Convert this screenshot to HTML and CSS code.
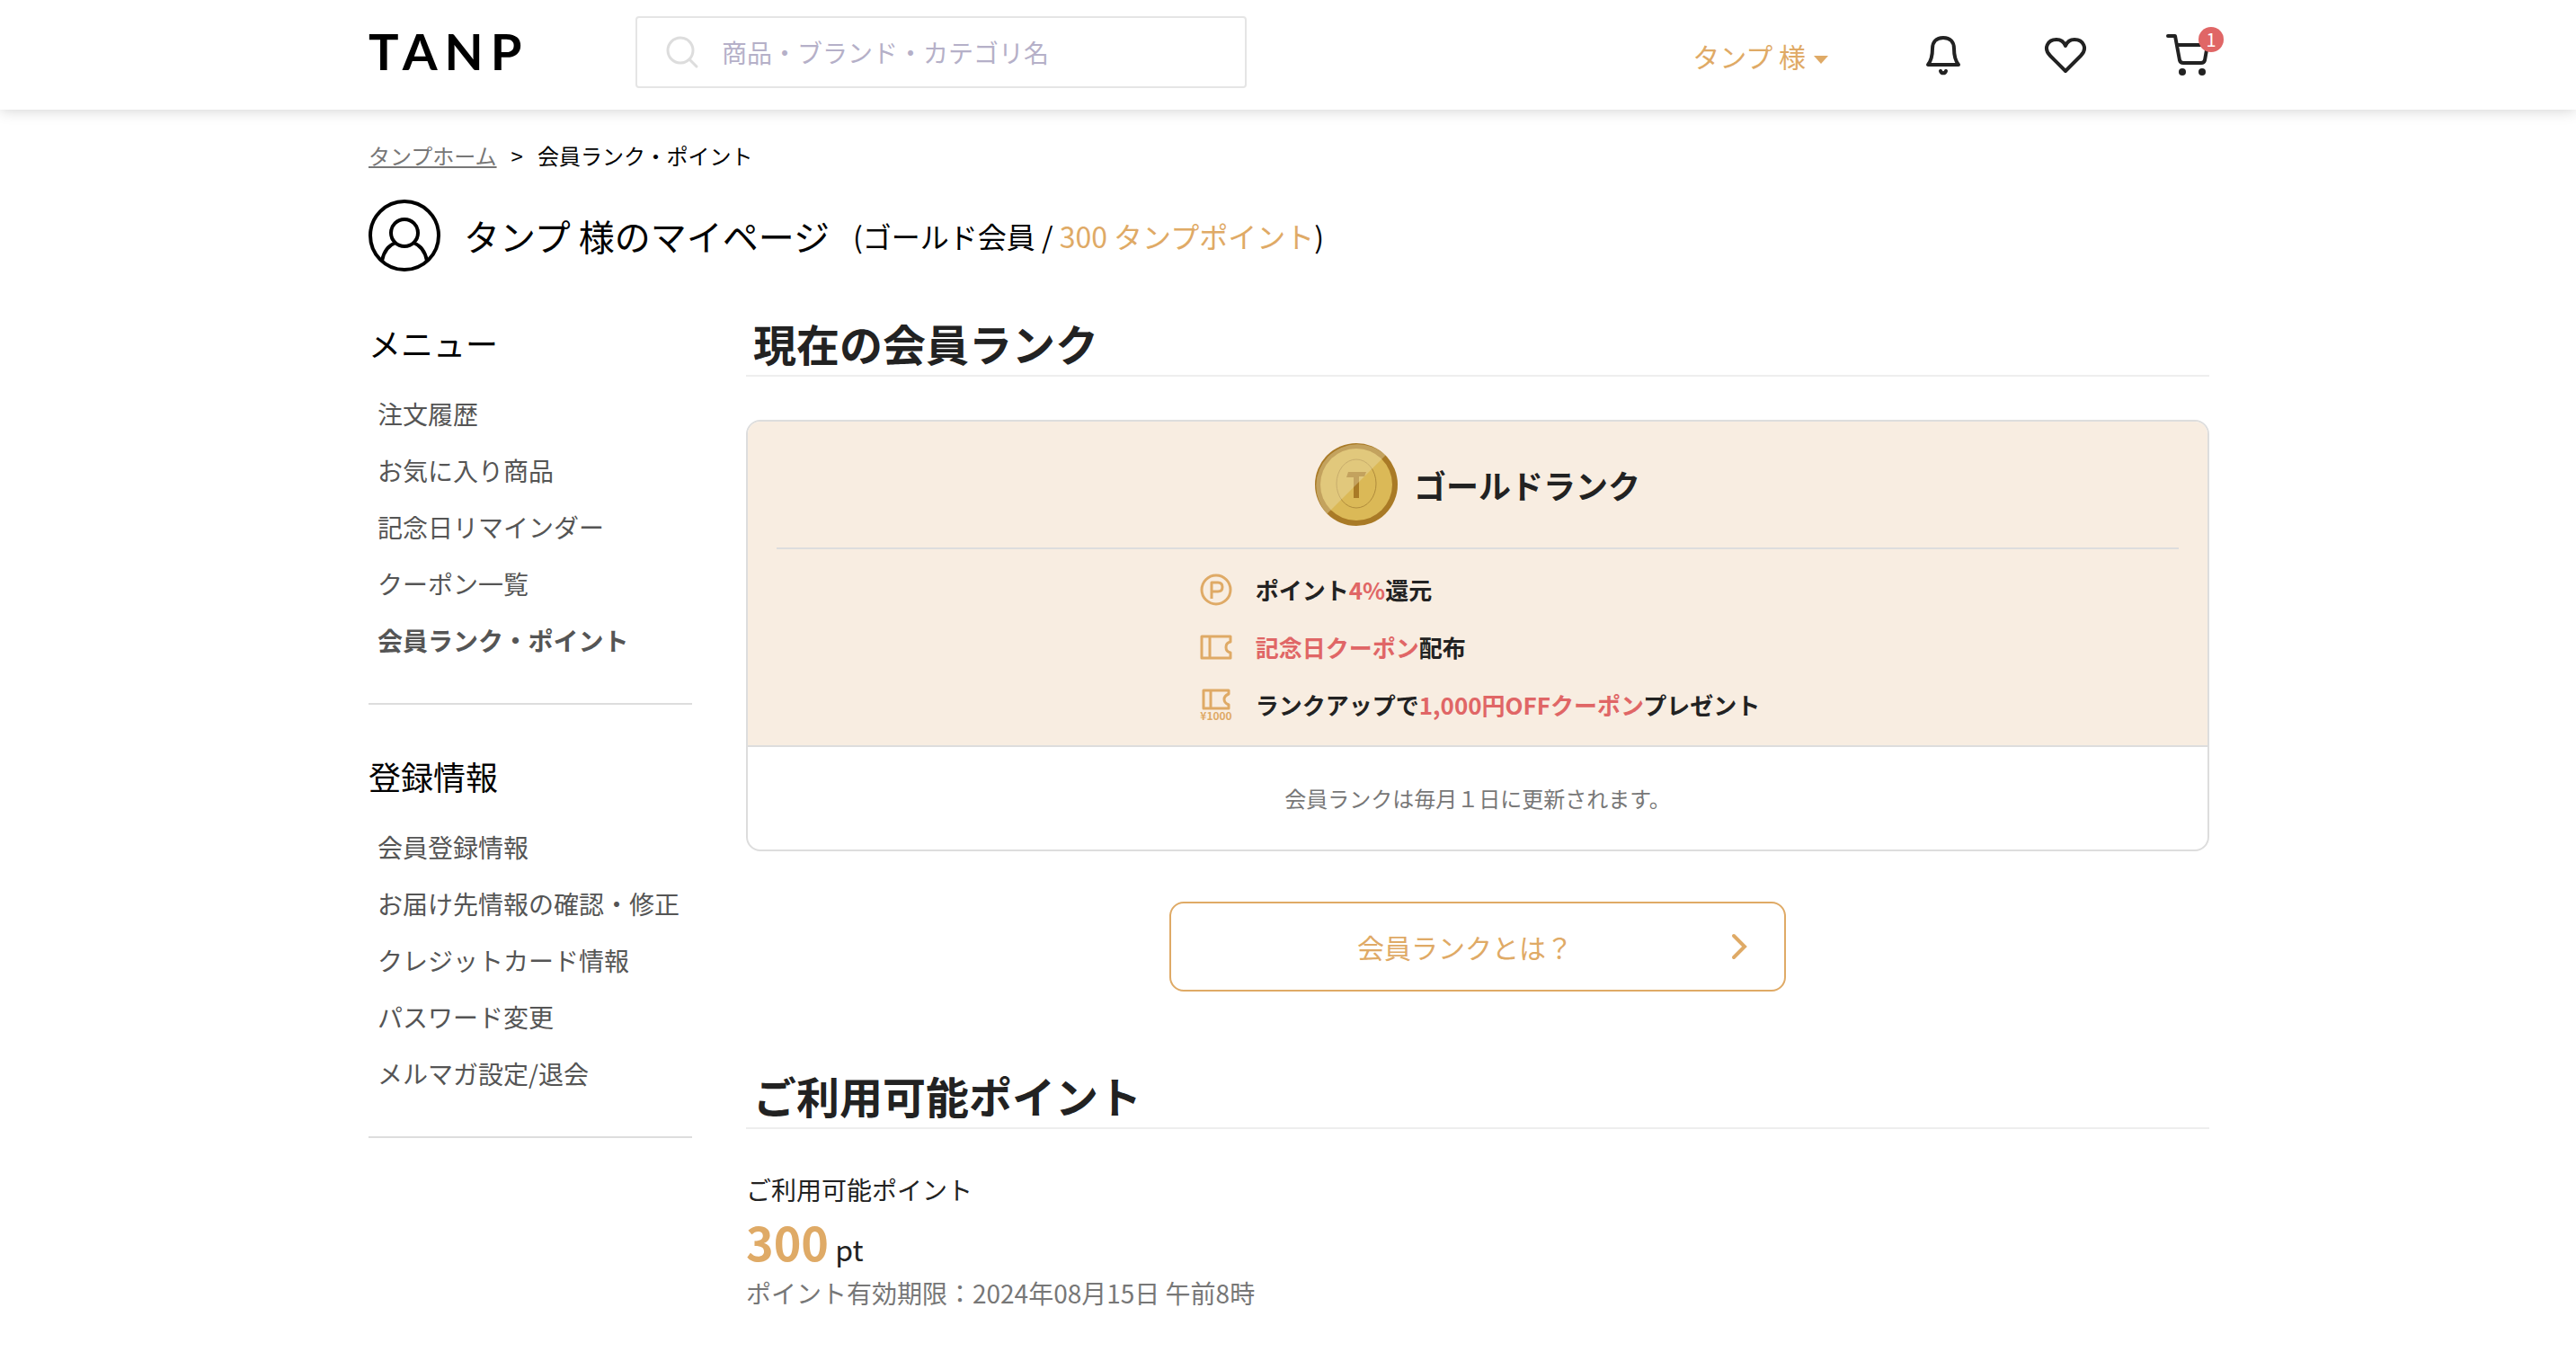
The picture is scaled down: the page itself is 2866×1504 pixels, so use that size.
FILE: index.html
```html
<!DOCTYPE html>
<html lang="ja">
<head>
<meta charset="utf-8">
<meta name="viewport" content="width=device-width, initial-scale=1">
<title>会員ランク・ポイント | TANP</title>
<link rel="stylesheet" href="styles.css">
</head>
<body>
<header class="site-header">
  <div class="container header-inner">
    <a class="logo" href="#">TANP</a>
    <form class="search" role="search">
      <svg class="search-icon" viewBox="0 0 36 36" aria-hidden="true"><circle cx="16" cy="16" r="14"/><path d="M27 27l7 7"/></svg>
      <input class="search-input" type="search" aria-label="商品検索" placeholder="商品・ブランド・カテゴリ名">
    </form>
    <nav class="header-nav" aria-label="アカウント">
      <button class="user-menu" type="button">タンプ 様<span class="caret"></span></button>
      <a class="nav-icon" href="#" aria-label="お知らせ">
        <svg viewBox="0 0 48 48"><path d="M24 4c-8 0-12 5-12 12 0 8-1 13-5 18h34c-4-5-5-10-5-18 0-7-4-12-12-12z"/><path d="M21 41c1 3 5 3 6 0"/></svg>
      </a>
      <a class="nav-icon" href="#" aria-label="お気に入り">
        <svg viewBox="0 0 48 48"><path d="M24 41L7 24C-1 16 4 6 14 6c4 0 8 2 10 7 2-5 6-7 10-7 10 0 15 10 7 18z"/></svg>
      </a>
      <a class="nav-icon" href="#" aria-label="カート">
        <svg viewBox="0 0 48 48"><path d="M2 2h8l5 27q1 3 4 3h20q3 0 4-3l3-17H12"/><circle class="solid" cx="18" cy="42" r="4"/><circle class="solid" cx="40" cy="42" r="4"/></svg>
        <span class="badge">1</span>
      </a>
    </nav>
  </div>
</header>

<div class="container">
  <nav class="breadcrumb" aria-label="パンくず">
    <a href="#">タンプホーム</a><span>&gt;</span><span>会員ランク・ポイント</span>
  </nav>

  <div class="profile">
    <svg class="avatar" viewBox="0 0 80 80" aria-hidden="true"><circle cx="40" cy="40" r="38"/><circle cx="40" cy="37" r="15"/><path d="M15 68c2-10 7-17 15-20M65 68c-2-10-7-17-15-20"/></svg>
    <h1 class="profile-name">タンプ 様のマイページ</h1>
    <p class="profile-rank">(ゴールド会員 / <a href="#">300 タンプポイント</a>)</p>
  </div>

  <div class="columns">
    <aside class="sidebar">
      <section class="menu">
        <h2 class="menu-title">メニュー</h2>
        <ul class="menu-list">
          <li><a href="#">注文履歴</a></li>
          <li><a href="#">お気に入り商品</a></li>
          <li><a href="#">記念日リマインダー</a></li>
          <li><a href="#">クーポン一覧</a></li>
          <li><a class="current" href="#" aria-current="page">会員ランク・ポイント</a></li>
        </ul>
      </section>
      <section class="menu">
        <h2 class="menu-title">登録情報</h2>
        <ul class="menu-list">
          <li><a href="#">会員登録情報</a></li>
          <li><a href="#">お届け先情報の確認・修正</a></li>
          <li><a href="#">クレジットカード情報</a></li>
          <li><a href="#">パスワード変更</a></li>
          <li><a href="#">メルマガ設定/退会</a></li>
        </ul>
      </section>
    </aside>

    <main class="content">
      <section>
        <h2 class="section-title">現在の会員ランク</h2>
        <div class="rank-card">
          <div class="rank-body">
            <div class="rank-head">
              <svg class="coin" viewBox="0 0 92 92" aria-hidden="true">
                <circle cx="46" cy="46" r="46" fill="#a97a26"/>
                <circle cx="46" cy="46" r="40" fill="#dbb957"/>
                <ellipse cx="46" cy="45" rx="22" ry="27" fill="none" stroke="#b08c3c"/>
                <path d="M37 32h20l-2 5h-6v24h-6V38h-8z" fill="#a97a26"/>
                <path d="M78.5 13.5A46 46 0 0 0 13.5 78.5z" fill="#ecdfb4" fill-opacity=".4"/>
              </svg>
              <h3 class="rank-name">ゴールドランク</h3>
            </div>
            <ul class="benefits">
              <li>
                <svg class="benefit-icon" viewBox="0 0 36 36" aria-hidden="true"><circle cx="18" cy="18" r="16"/><path d="M13 28V10h7q5 0 5 5t-5 5h-7"/></svg>
                <p>ポイント<em>4%</em>還元</p>
              </li>
              <li>
                <svg class="benefit-icon" viewBox="0 0 36 36" aria-hidden="true"><path d="M2 6h32v6q-5 1-5 6t5 6v6H2zM11 6v24"/></svg>
                <p><em>記念日クーポン</em>配布</p>
              </li>
              <li>
                <svg class="benefit-icon" viewBox="0 0 36 36" aria-hidden="true"><path d="M4 2h28v4q-5 2-5 6t5 6v4H4zM12 2v20"/><text x="18" y="35" text-anchor="middle">¥1000</text></svg>
                <p>ランクアップで<em>1,000円OFFクーポン</em>プレゼント</p>
              </li>
            </ul>
          </div>
          <p class="rank-note">会員ランクは毎月１日に更新されます。</p>
        </div>
        <a class="about-link" href="#"><span>会員ランクとは？</span><svg viewBox="0 0 16 28" aria-hidden="true"><path d="M2 2l12 12L2 26"/></svg></a>
      </section>

      <section class="points">
        <h2 class="section-title">ご利用可能ポイント</h2>
        <p class="points-label">ご利用可能ポイント</p>
        <p class="points-value"><strong>300</strong> pt</p>
        <p class="points-expiry">ポイント有効期限：2024年08月15日 午前8時</p>
      </section>
    </main>
  </div>
</div>
</body>
</html>
```
FILE: styles.css
```css
:root {
  --gold: #dfaa66;
  --red: #e06666;
  --ink: #222;
  --line: #ddd;
}

* { box-sizing: border-box; }

body, h1, h2, h3, p, ul { margin: 0; padding: 0; }
ul { list-style: none; }

body {
  font-family: "Noto Sans CJK JP", sans-serif;
  font-size: 28px;
  color: #000;
  background: #fff;
}

a { color: inherit; text-decoration: none; }
svg { display: block; fill: none; flex: none; overflow: visible; }

.container {
  max-width: 2050px;
  margin: 0 auto;
  padding-left: 2px;
}

/* Header */
.site-header {
  background: #fff;
  box-shadow: 0 0 16px rgba(0, 0, 0, .2);
}
.container.header-inner {
  display: flex;
  align-items: center;
  padding: 18px 0 24px 2px;
}
.logo {
  width: 297px;
  padding-bottom: 2px;
  font: 700 56px/78px Lato, sans-serif;
  letter-spacing: 8px;
}
.search {
  display: flex;
  align-items: center;
  gap: 26px;
  flex: 0 1 680px;
  height: 80px;
  padding-left: 32px;
  border: 2px solid #e5e5e5;
  border-radius: 4px;
}
.search-icon { width: 36px; stroke: #ddd; stroke-width: 3; stroke-linecap: round; }
.search-input {
  flex: 1;
  min-width: 0;
  padding: 0;
  border: 0;
  outline: 0;
  background: none;
  font: inherit;
}
.search-input::placeholder { color: #b5b0c8; opacity: 1; }
.header-nav {
  display: flex;
  align-items: center;
  gap: 88px;
  margin-left: auto;
  padding-top: 8px;
}
.user-menu {
  display: flex;
  align-items: center;
  gap: 9px;
  margin-right: 16px;
  padding: 0;
  border: 0;
  background: none;
  color: var(--gold);
  font: inherit;
  font-size: 30px;
}
.caret {
  border: 8px solid transparent;
  border-top: 9px solid currentColor;
  border-bottom: 0;
  margin-top: 8px;
}
.nav-icon { position: relative; }
.nav-icon svg {
  width: 48px;
  height: 48px;
  stroke: var(--ink);
  stroke-width: 4;
  stroke-linejoin: round;
  stroke-linecap: round;
}
.nav-icon .solid { fill: var(--ink); stroke: none; }
.badge {
  position: absolute;
  top: -8px;
  right: -16px;
  width: 28px;
  border-radius: 50%;
  background: var(--red);
  color: #fff;
  font-size: 20px;
  line-height: 28px;
  text-align: center;
}

/* Page heading */
.breadcrumb {
  display: flex;
  gap: 16px;
  padding-top: 33px;
  font-size: 24px;
  line-height: 36px;
}
.breadcrumb a { color: #777; text-decoration: underline; }
.profile {
  display: flex;
  align-items: center;
  margin-top: 31px;
}
.avatar { width: 80px; stroke: #000; stroke-width: 4; }
.profile-name { margin: 0 26px; font-size: 40px; line-height: 60px; font-weight: 400; }
.profile-rank { font-size: 32px; line-height: 60px; }
.profile-rank a { color: var(--gold); }

/* Columns */
.columns {
  display: grid;
  grid-template-columns: 360px 1fr;
  gap: 60px;
  margin-top: 45px;
}
.sidebar { padding-top: 8px; }
.menu { padding-bottom: 38px; border-bottom: 2px solid var(--line); }
.menu + .menu { margin-top: 53px; }
.menu-title { font-size: 36px; line-height: 52px; font-weight: 400; }
.menu-list { margin-top: 22px; padding-left: 10px; color: #555; }
.menu-list a { display: block; line-height: 63px; white-space: nowrap; }
.menu-list .current { font-weight: 700; }

.section-title {
  padding: 0 0 2px 8px;
  border-bottom: 2px solid #eee;
  color: var(--ink);
  font-size: 48px;
  line-height: 68px;
}

/* Rank card */
.rank-card {
  margin-top: 48px;
  border: 2px solid var(--line);
  border-radius: 16px;
  overflow: hidden;
}
.rank-body {
  padding: 0 32px;
  border-bottom: 2px solid var(--line);
  background: #f8ede1;
}
.rank-head {
  display: flex;
  align-items: center;
  justify-content: center;
  gap: 18px;
  padding: 24px 0;
  border-bottom: 2px solid var(--line);
}
.coin { width: 92px; }
.rank-name { color: var(--ink); font-size: 36px; line-height: 52px; }
.benefits {
  width: max-content;
  margin: 0 auto;
  padding: 13px 0 13px 5px;
  color: var(--ink);
  font-size: 26px;
  font-weight: 700;
  line-height: 64px;
}
.benefits li { display: flex; align-items: center; gap: 26px; }
.benefits em { color: var(--red); font-style: normal; }
.benefit-icon { width: 36px; stroke: var(--gold); stroke-width: 3; stroke-linejoin: round; }
.benefit-icon text { fill: var(--gold); stroke: none; font-size: 12px; font-weight: 700; line-height: 16px; }
.rank-note {
  padding: 39px 0;
  color: #777;
  font-size: 24px;
  line-height: 36px;
  text-align: center;
}

.about-link {
  display: flex;
  align-items: center;
  width: 686px;
  height: 100px;
  margin: 56px auto 0;
  padding: 0 42px 0 30px;
  border: 2px solid var(--gold);
  border-radius: 16px;
  color: var(--gold);
  font-size: 30px;
}
.about-link span { flex: 1; text-align: center; }
.about-link svg { width: 16px; stroke: currentColor; stroke-width: 4; stroke-linecap: round; }

/* Points */
.points { margin-top: 81px; color: var(--ink); }
.points-label { margin-top: 46px; line-height: 42px; }
.points-value { font-size: 32px; line-height: 48px; }
.points-value strong { color: var(--gold); font-size: 52px; line-height: 74px; }
.points-expiry { color: #777; line-height: 40px; }
```
